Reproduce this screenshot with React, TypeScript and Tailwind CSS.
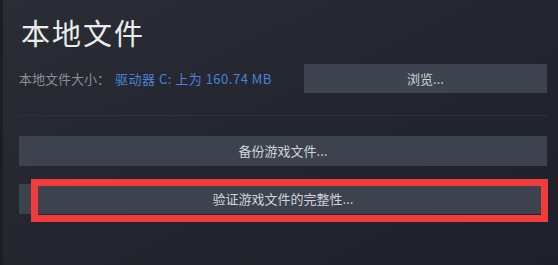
import React from "react";

export default function App() {
  const font = { fontFamily: '"Noto Sans CJK SC", "Noto Sans", sans-serif' };
  return (
    <div
      className="relative w-[558px] h-[265px] overflow-hidden bg-gradient-to-br from-[#2a2d36] via-[#23262e] to-[#1e2129]"
      style={font}
    >
      <div className="absolute left-0 top-0 h-full w-[3px] bg-[#1c1e24]" />
      <div className="flex flex-col pl-[19px] pr-[11px] pt-[14px]">
        <div className="h-[36px] text-[29px] leading-[36px] tracking-[2px] text-[#ececec] pl-[2px]">
          本地文件
        </div>
        <div className="mt-[14px] flex h-[29px] items-center justify-between">
          <div className="text-[13px] leading-none">
            <span className="text-[#8a8e96]">本地文件大小：</span>
            <span className="ml-[5px] tracking-[0.5px] text-[#4a82db]">驱动器 C: 上为 160.74 MB</span>
          </div>
          <div className="flex h-[29px] w-[243px] items-center justify-center bg-[#3e4350] text-[13px] text-[#d0d3d8]">
            浏览...
          </div>
        </div>
        <div className="mt-[22px] h-px bg-[#2e323b]" />
        <div className="mt-[20px] flex h-[30px] items-center justify-center bg-[#3d424f] text-[13px] text-[#d0d3d8]">
          备份游戏文件...
        </div>
        <div className="mt-[18px] flex h-[30px] items-center justify-center bg-[#3d424f] text-[13px] text-[#d0d3d8]">
          验证游戏文件的完整性...
        </div>
      </div>
      <div className="absolute left-[31px] top-[179px] h-[43px] w-[517px] border-[7px] border-[#f23b3b]" />
    </div>
  );
}
